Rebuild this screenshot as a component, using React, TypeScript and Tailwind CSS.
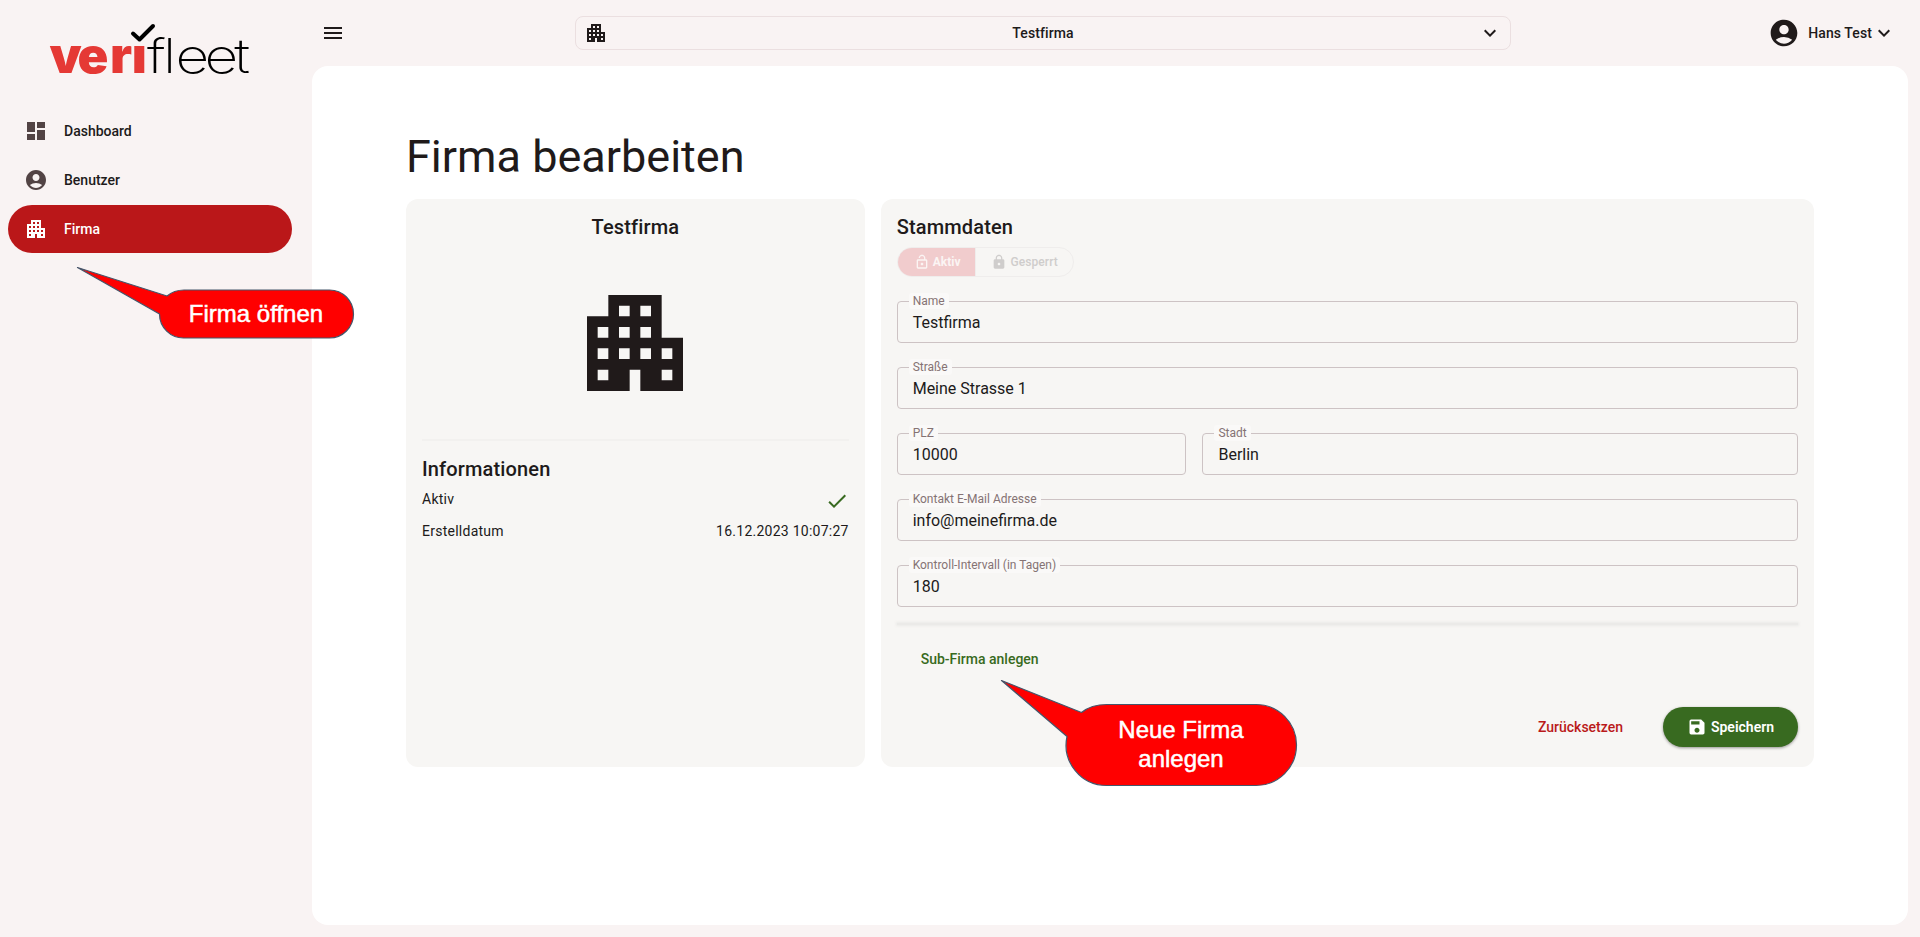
import React from "react";
import {
  MdDashboard,
  MdAccountCircle,
  MdApartment,
  MdMenu,
  MdExpandMore,
  MdCheck,
  MdSave,
  MdLock,
  MdLockOpen,
} from "react-icons/md";

function Logo() {
  return (
    <svg width="240" height="107" viewBox="0 0 240 107" className="ml-[47px] block overflow-visible">
      <text
        x="2.400 29.300 60.500 81.500"
        y="73.5"
        transform="scale(1.04 1)"
        fontSize="49"
        fontWeight="900"
        fill="#e53935"
        fontFamily="Inter, sans-serif"
      >
        verı
      </text>
      <text
        x="82 95 105.300 129.200 153.400"
        y="73.5"
        transform="scale(1.22 1)"
        fontSize="48"
        fontWeight="200"
        fill="#000"
        fontFamily="Inter, sans-serif"
      >
        fleet
      </text>
      <path
        d="M86 33.500l6.500 6L106 26"
        fill="none"
        stroke="#000"
        strokeWidth="4"
        strokeLinecap="round"
        strokeLinejoin="round"
      />
    </svg>
  );
}

const nav = [
  { label: "Dashboard", Icon: MdDashboard, active: false },
  { label: "Benutzer", Icon: MdAccountCircle, active: false },
  { label: "Firma", Icon: MdApartment, active: true },
];

function Sidebar() {
  return (
    <aside className="w-[312px] shrink-0">
      <Logo />
      <nav className="flex flex-col gap-px pl-2 pr-5">
        {nav.map(({ label, Icon, active }) => (
          <a
            key={label}
            className={
              active
                ? "flex h-12 items-center gap-4 rounded-full bg-[#ba1719] px-4 text-sm font-medium text-white"
                : "flex h-12 items-center gap-4 rounded-full px-4 text-sm font-medium text-[#201a1a]"
            }
          >
            <Icon size={24} className={active ? "text-white" : "text-[#524344]"} />
            {label}
          </a>
        ))}
      </nav>
    </aside>
  );
}

function Header() {
  return (
    <header className="flex h-[66px] items-center pl-[9px] text-sm font-medium tracking-[0.1px]">
      <MdMenu size={24} />
      <div className="ml-[230px] flex h-[34px] w-[936px] items-center rounded-lg border border-[#ebdfe0] px-2">
        <MdApartment size={24} />
        <span className="flex-1 text-center">Testfirma</span>
        <MdExpandMore size={24} />
      </div>
      <div className="ml-auto mr-3 flex items-center">
        <MdAccountCircle size={32} />
        <span className="ml-2">Hans Test</span>
        <MdExpandMore size={24} />
      </div>
    </header>
  );
}

function Field({ label, value, className = "" }: { label: string; value: string; className?: string }) {
  return (
    <div className={`relative h-[42px] rounded border border-[#cdc3c4] px-[15px] pt-[9px] ${className}`}>
      <span className="absolute -top-[9px] left-[11px] h-4 rounded-[3px] bg-[#faf9f8] px-1 text-xs leading-4 text-[#857374]">
        {label}
      </span>
      <span className="block text-base leading-6 text-[#201a1a]">{value}</span>
    </div>
  );
}

function CompanyCard() {
  return (
    <section className="flex flex-col rounded-xl bg-[#f7f6f4] p-4">
      <h2 className="text-center text-xl leading-6 font-medium tracking-[0.15px]">Testfirma</h2>
      <MdApartment size={128} className="mx-auto mt-10" />
      <div className="mt-8 h-0.5 bg-[#f2f1ef]" />
      <h2 className="mt-4 text-xl leading-6 font-medium tracking-[0.15px]">Informationen</h2>
      <div className="mt-2 flex h-8 items-start justify-between text-sm leading-5 tracking-[0.25px]">
        <span>Aktiv</span>
        <MdCheck size={24} className="text-[#386a20]" />
      </div>
      <div className="flex h-8 justify-between text-sm leading-5 tracking-[0.25px]">
        <span>Erstelldatum</span>
        <span>16.12.2023 10:07:27</span>
      </div>
    </section>
  );
}

function MasterData() {
  return (
    <section className="col-span-2 h-[568px] rounded-xl bg-[#f7f6f4] p-4">
      <h2 className="text-xl leading-6 font-medium tracking-[0.15px]">Stammdaten</h2>
      <div className="mt-2 flex h-[30px] w-[177px] overflow-hidden rounded-full border border-[#efedec] text-xs font-bold">
        <div className="flex w-[77px] items-center justify-center gap-[3px] bg-[#f1cccd] pl-0.5 text-[#fbf5f4]">
          <MdLockOpen size={16} />
          Aktiv
        </div>
        <div className="flex flex-1 items-center justify-center gap-[3px] border-l border-[#efedec] pl-px font-medium tracking-[0.1px] text-[#cfcdcc]">
          <MdLock size={16} />
          Gesperrt
        </div>
      </div>
      <div className="mt-6 grid grid-cols-3 gap-x-4 gap-y-6">
        <Field label="Name" value="Testfirma" className="col-span-3" />
        <Field label="Straße" value="Meine Strasse 1" className="col-span-3" />
        <Field label="PLZ" value="10000" />
        <Field label="Stadt" value="Berlin" className="col-span-2" />
        <Field label="Kontakt E-Mail Adresse" value="info@meinefirma.de" className="col-span-3" />
        <Field label="Kontroll-Intervall (in Tagen)" value="180" className="col-span-3" />
      </div>
      <div className="mt-4 h-0.5 bg-[#ebeae8] shadow-[0_0_3px_1px_#ebeae8]" />
      <button className="mt-[14px] flex h-10 items-center px-6 text-sm font-medium text-[#386a20]">
        Sub-Firma anlegen
      </button>
      <div className="mt-7 flex justify-end gap-4">
        <button className="flex h-10 items-center px-6 text-sm font-medium text-[#ba1a1a]">Zurücksetzen</button>
        <button className="flex h-10 w-[135px] items-center justify-center gap-1 rounded-full bg-[#386a20] text-sm font-semibold text-white shadow-[0_1px_3px_rgba(0,0,0,0.4)]">
          <MdSave size={20} />
          Speichern
        </button>
      </div>
    </section>
  );
}

function Callouts() {
  return (
    <svg
      className="pointer-events-none absolute inset-0 font-['Liberation_Sans',sans-serif]"
      width="1920"
      height="937"
      fontSize="24"
      fill="#fff"
      textAnchor="middle"
    >
      <g fill="#f00" stroke="#45566b" strokeWidth="1.2" strokeLinejoin="round">
        <path d="M77.500 267.500L167 296Q174 290 184 290H329.500A24 24 0 0 1 329.500 338H184A24 24 0 0 1 159.500 314Z" />
        <path d="M1001.500 680.500L1081.500 712.500Q1091 704.500 1107 704.500H1256A40.500 40.500 0 0 1 1256 785.500H1107A40.500 40.500 0 0 1 1067 736.500Z" />
      </g>
      <text x="256" y="322" stroke="#fff" strokeWidth="0.500">Firma öffnen</text>
      <text x="1181" y="738" stroke="#fff" strokeWidth="0.500">Neue Firma</text>
      <text x="1181" y="767" stroke="#fff" strokeWidth="0.500">anlegen</text>
    </svg>
  );
}

export default function App() {
  return (
    <div className="relative flex h-[937px] w-[1920px] overflow-hidden bg-[#f9f3f3] font-['Roboto',sans-serif] text-[#201a1a]">
      <Sidebar />
      <div className="flex flex-1 flex-col pr-3 pb-3">
        <Header />
        <main className="flex-1 rounded-2xl bg-white px-[94px] pt-[65px]">
          <h1 className="text-[45px] leading-[52px]">Firma bearbeiten</h1>
          <div className="mt-4 grid grid-cols-3 gap-4">
            <CompanyCard />
            <MasterData />
          </div>
        </main>
      </div>
      <Callouts />
    </div>
  );
}
